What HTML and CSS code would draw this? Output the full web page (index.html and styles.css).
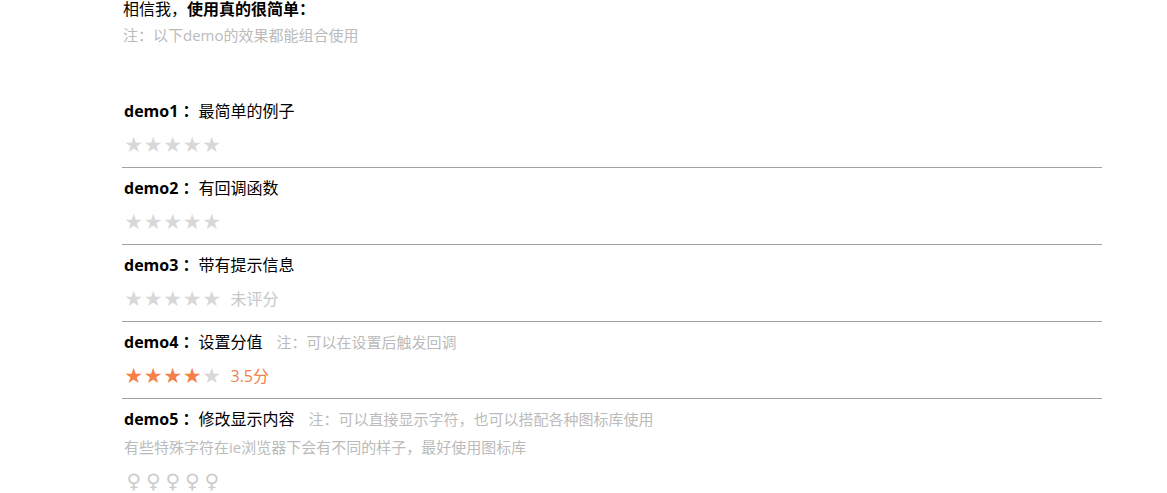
FILE: index.html
```html
<!DOCTYPE html>
<html lang="zh-CN">
<head>
    <meta charset="UTF-8">
    <meta name="viewport" content="width=device-width, initial-scale=1.0">
    <title>评分插件 demo</title>
    <link rel="stylesheet" href="styles.css">
</head>
<body>

    <div class="wrapper">
        <!-- 说明 -->
        <div class="intro">
            <p class="intro-title">相信我，<b>使用真的很简单：</b></p>
            <p class="tip">注：以下demo的效果都能组合使用</p>
        </div>

        <div class="demo">
            <h4><b>demo1 ：</b>最简单的例子</h4>
            <div class="rate">
                <span class="star">★</span><span class="star">★</span><span class="star">★</span><span class="star">★</span><span class="star">★</span>
            </div>
        </div>

        <div class="demo">
            <h4><b>demo2 ：</b>有回调函数</h4>
            <div class="rate">
                <span class="star">★</span><span class="star">★</span><span class="star">★</span><span class="star">★</span><span class="star">★</span>
            </div>
        </div>

        <div class="demo">
            <h4><b>demo3 ：</b>带有提示信息</h4>
            <div class="rate">
                <span class="star">★</span><span class="star">★</span><span class="star">★</span><span class="star">★</span><span class="star">★</span>
                <span class="hint">未评分</span>
            </div>
        </div>

        <div class="demo">
            <h4><b>demo4 ：</b>设置分值<span class="tip inline">注：可以在设置后触发回调</span></h4>
            <div class="rate">
                <span class="star on">★</span><span class="star on">★</span><span class="star on">★</span><span class="star on">★</span><span class="star">★</span>
                <span class="hint on">3.5分</span>
            </div>
        </div>

        <div class="demo last">
            <h4><b>demo5 ：</b>修改显示内容<span class="tip inline">注：可以直接显示字符，也可以搭配各种图标库使用</span></h4>
            <p class="tip sub">有些特殊字符在ie浏览器下会有不同的样子，最好使用图标库</p>
            <div class="rate">
                <span class="star female">♀</span><span class="star female">♀</span><span class="star female">♀</span><span class="star female">♀</span><span class="star female">♀</span>
            </div>
        </div>
    </div>

</body>
</html>
```

FILE: styles.css
```css
body {
    margin: 0;
    font-family: "Open Sans", "Noto Sans CJK SC", sans-serif;
    color: #000;
    background: #fff;
}

.wrapper {
    width: 980px;
    margin-left: 122px;
}

p {
    margin: 0;
}

.intro {
    margin-bottom: 46px;
    padding-left: 1px;
}

.intro-title {
    font-size: 16px;
    line-height: 18px;
}

.tip {
    font-size: 15px;
    line-height: 20px;
    color: #bbb;
    margin-top: 7px;
}

.tip.inline {
    margin-left: 14px;
    font-weight: normal;
}

.tip.sub {
    line-height: 24px;
    margin-top: 4px;
    padding-left: 2px;
}

.demo {
    padding: 8px 0 10px;
    border-bottom: 1px solid #a0a0a0;
}

.demo.last {
    border-bottom: none;
}

.demo h4 {
    margin: 0;
    padding-left: 2px;
    font-size: 16px;
    line-height: 24px;
    font-weight: normal;
}

.demo h4 b {
    font-weight: bold;
}

.rate {
    margin-top: 10px;
    padding-left: 2px;
    height: 24px;
    line-height: 24px;
    display: flex;
    align-items: center;
}

.star {
    display: inline-block;
    width: 19.5px;
    text-align: center;
    font-size: 21px;
    color: #d8d8d8;
    font-family: "DejaVu Sans", sans-serif;
}

.star.on {
    color: #f7804a;
}

.star.female {
    font-size: 20px;
    color: #ccc;
}

.hint {
    margin-left: 9px;
    font-size: 16px;
    color: #c8c8c8;
}

.hint.on {
    color: #f0814e;
}
```
